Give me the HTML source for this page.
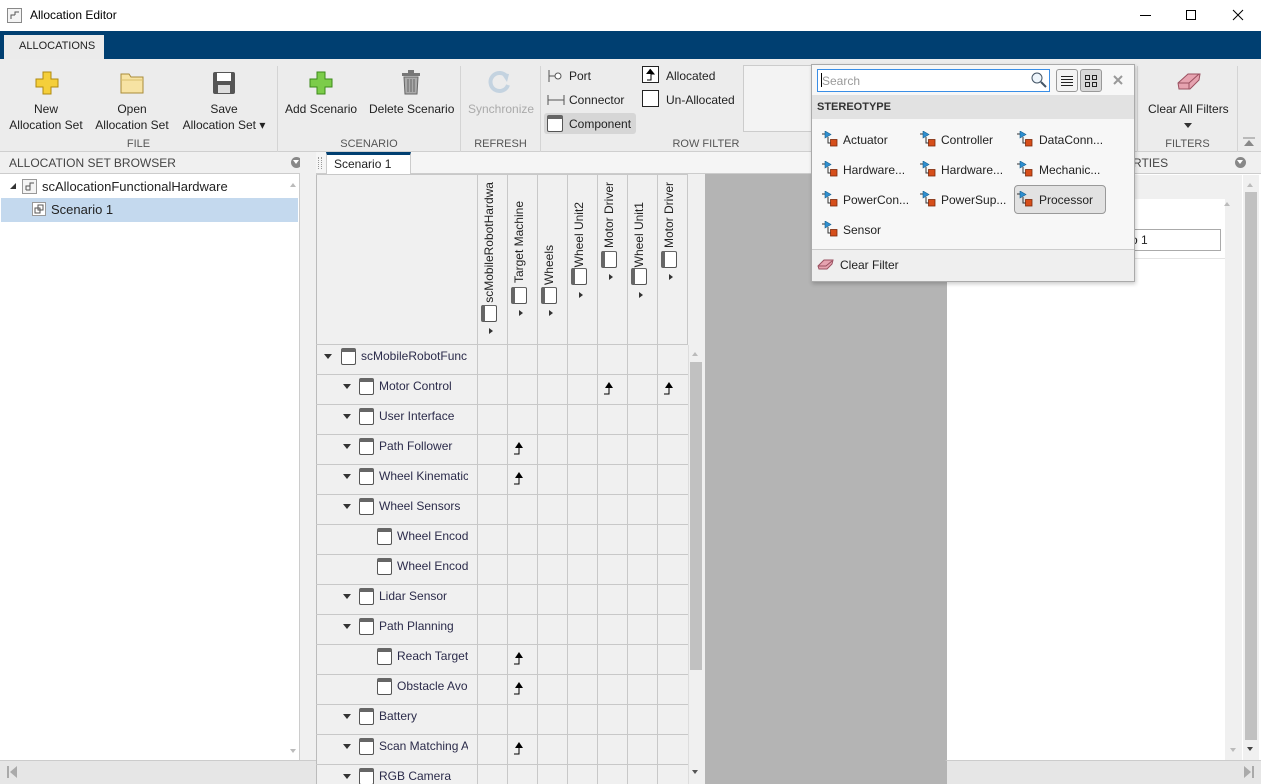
<!DOCTYPE html>
<html><head><meta charset="utf-8"><style>
*{box-sizing:border-box;margin:0;padding:0}
html,body{width:1261px;height:784px;overflow:hidden}
body{position:relative;background:#f0f0f0;font-family:"Liberation Sans",sans-serif;font-size:12px;color:#222}
.a{position:absolute}
.t{position:absolute;white-space:nowrap}
.lbl{position:absolute;font-size:11px;color:#555;text-align:center}
.sep{position:absolute;top:66px;width:1px;height:86px;background:#d4d4d4}
.ci{position:absolute;width:15px;height:17px;border:1.5px solid #555;border-top:4px solid #666;border-radius:2px;background:#fff}
.tri{position:absolute;width:0;height:0;border-left:4px solid transparent;border-right:4px solid transparent;border-top:5px solid #333}
.trr{position:absolute;width:0;height:0;border-top:3.5px solid transparent;border-bottom:3.5px solid transparent;border-left:4px solid #333}
.row{position:absolute;left:316px;width:372px;height:30px;border-bottom:1px solid #c8c8c8}
.rt{position:absolute;top:4px;font-size:12px;color:#2b2b4a;white-space:nowrap;overflow:hidden}
.vl{position:absolute;top:174px;width:1px;height:610px;background:#c8c8c8}
.vt{position:absolute;writing-mode:vertical-rl;transform:rotate(180deg);font-size:12px;color:#222;white-space:nowrap}
.st{position:absolute;font-size:12px;color:#222}
</style></head><body>
<div class="a" style="left:0;top:0;width:1261px;height:31px;background:#fff"></div>
<div class="a" style="left:7px;top:8px;width:15px;height:15px;border:1px solid #888;background:#f4f4f4"></div>
<svg class="a" style="left:8px;top:9px" width="13" height="13"><path d="M3 10V6h4M7 6V3h4" stroke="#555" fill="none"/></svg>
<div class="t" style="left:30px;top:8px;font-size:12px;color:#000">Allocation Editor</div>
<div class="a" style="left:1140px;top:15px;width:11px;height:1px;background:#000"></div>
<div class="a" style="left:1186px;top:10px;width:10px;height:10px;border:1px solid #000"></div>
<svg class="a" style="left:1232px;top:9px" width="12" height="12"><path d="M1 1L11 11M11 1L1 11" stroke="#000"/></svg>
<div class="a" style="left:0;top:31px;width:1261px;height:28px;background:#003f71"></div>
<div class="a" style="left:4px;top:35px;width:100px;height:25px;background:#ebebeb"></div>
<div class="t" style="left:19px;top:40px;font-size:11px;color:#222">ALLOCATIONS</div>
<div class="a" style="left:0;top:59px;width:1261px;height:93px;background:#ececec;border-bottom:1px solid #cfcfcf"></div>
<svg class="a" style="left:34px;top:70px" width="26" height="26"><path d="M9 2h8v7h7v8h-7v7H9v-7H2V9h7z" fill="#f5cf3a" stroke="#b08a10"/></svg>
<div class="t" style="left:0;top:101px;width:92px;text-align:center;line-height:16px">New<br>Allocation Set</div>
<svg class="a" style="left:118px;top:70px" width="28" height="26"><path d="M3 4h8l2 3h12v16H3z" fill="#f7e3a3" stroke="#a98b3a"/><path d="M3 10h22" stroke="#d9bf6e"/></svg>
<div class="t" style="left:88px;top:101px;width:88px;text-align:center;line-height:16px">Open<br>Allocation Set</div>
<svg class="a" style="left:211px;top:70px" width="26" height="26"><rect x="2" y="2" width="22" height="22" rx="2" fill="#555"/><rect x="6" y="3" width="14" height="8" fill="#fff"/><rect x="7" y="15" width="12" height="8" fill="#ddd"/></svg>
<div class="t" style="left:178px;top:101px;width:92px;text-align:center;line-height:16px">Save<br>Allocation Set &#9662;</div>
<div class="sep" style="left:277px"></div>
<div class="lbl" style="left:0;top:138px;width:277px">FILE</div>
<svg class="a" style="left:308px;top:70px" width="26" height="26"><path d="M9 2h8v7h7v8h-7v7H9v-7H2V9h7z" fill="#7ccc4a" stroke="#3c8a1a"/></svg>
<div class="t" style="left:285px;top:102px">Add Scenario</div>
<svg class="a" style="left:400px;top:70px" width="22" height="26"><rect x="2" y="3" width="18" height="3" fill="#777"/><rect x="8" y="0" width="6" height="3" fill="#777"/><path d="M4 7h14l-1 17H5z" fill="#aaa" stroke="#666"/><path d="M8 9v13M11 9v13M14 9v13" stroke="#666"/></svg>
<div class="t" style="left:369px;top:102px">Delete Scenario</div>
<div class="sep" style="left:460px"></div>
<div class="lbl" style="left:278px;top:138px;width:182px">SCENARIO</div>
<svg class="a" style="left:487px;top:69px" width="26" height="26"><path d="M20 8A9 9 0 1 0 21 16" stroke="#c4d3e0" stroke-width="4" fill="none"/><path d="M14 4l8 1-2 8z" fill="#c4d3e0"/></svg>
<div class="t" style="left:468px;top:102px;color:#aaa">Synchronize</div>
<div class="sep" style="left:540px"></div>
<div class="lbl" style="left:461px;top:138px;width:79px">REFRESH</div>
<svg class="a" style="left:547px;top:69px" width="18" height="14"><path d="M2 1v12M2 7h6" stroke="#555"/><circle cx="11" cy="7" r="3" fill="#fff" stroke="#555"/></svg>
<div class="t" style="left:569px;top:69px">Port</div>
<svg class="a" style="left:546px;top:93px" width="20" height="14"><path d="M2 2v10M18 2v10M2 7h16" stroke="#555"/></svg>
<div class="t" style="left:569px;top:93px">Connector</div>
<div class="a" style="left:544px;top:113px;width:92px;height:21px;background:#d6d6d6;border-radius:3px"></div>
<div class="ci" style="left:547px;top:115px;width:16px;height:17px"></div>
<div class="t" style="left:569px;top:117px">Component</div>
<div class="a" style="left:642px;top:66px;width:17px;height:17px;border:1.5px solid #222;background:#fff"></div>
<svg class="a" style="left:642px;top:66px" width="17" height="17"><path d="M8 3l4 5H9v6H5" stroke="#000" fill="none"/><path d="M8 3l4 5H4z" fill="#000"/></svg>
<div class="t" style="left:666px;top:69px">Allocated</div>
<div class="a" style="left:642px;top:90px;width:17px;height:17px;border:1.5px solid #222;background:#fff"></div>
<div class="t" style="left:666px;top:93px">Un-Allocated</div>
<div class="a" style="left:743px;top:65px;width:75px;height:67px;border:1px solid #ccc;background:#f3f3f3"></div>
<div class="lbl" style="left:541px;top:138px;width:330px">ROW FILTER</div>
<div class="sep" style="left:1137px"></div>
<svg class="a" style="left:1174px;top:70px" width="30" height="22"><path d="M4 13L14 4h12l-1 6-9 9H5z" fill="#e6a3b0" stroke="#9a5060"/><path d="M4 13h11l10-9M15 13v6" stroke="#9a5060" fill="none"/></svg>
<div class="t" style="left:1148px;top:102px">Clear All Filters</div>
<div class="tri" style="left:1184px;top:123px"></div>
<div class="lbl" style="left:1138px;top:138px;width:99px">FILTERS</div>
<div class="sep" style="left:1237px"></div>
<svg class="a" style="left:1242px;top:137px" width="14" height="12"><path d="M1 1h12" stroke="#888"/><path d="M7 3l5 6H2z" fill="#888"/></svg>

<div class="a" style="left:0;top:152px;width:300px;height:22px;background:#f0f0f0;border-bottom:1px solid #ccc"></div>
<div class="t" style="left:9px;top:156px;color:#444">ALLOCATION SET BROWSER</div>
<div class="a" style="left:291px;top:157px;width:11px;height:11px;border-radius:50%;background:#888"></div>
<div class="a" style="left:293px;top:160px;border-left:3.5px solid transparent;border-right:3.5px solid transparent;border-top:4px solid #fff"></div>
<div class="a" style="left:0;top:174px;width:300px;height:586px;background:#fff;border-right:1px solid #ccc"></div>
<div class="a" style="left:1px;top:198px;width:297px;height:24px;background:#c4d9ee"></div>
<div class="a" style="left:10px;top:183px;border-left:6px solid transparent;border-bottom:6px solid #333"></div>
<div class="a" style="left:22px;top:179px;width:15px;height:15px;border:1px solid #999;background:#f4f4f4"></div>
<svg class="a" style="left:23px;top:180px" width="13" height="13"><path d="M3 10V6h4V3h4M3 10h4V6" stroke="#555" fill="none"/></svg>
<div class="t" style="left:42px;top:179px;font-size:13px">scAllocationFunctionalHardware</div>
<div class="a" style="left:32px;top:202px;width:14px;height:14px;border:1px solid #999;background:#fff"></div>
<svg class="a" style="left:33px;top:203px" width="12" height="12"><rect x="2" y="5" width="5" height="5" fill="none" stroke="#555"/><rect x="5" y="2" width="5" height="5" fill="none" stroke="#555"/></svg>
<div class="t" style="left:51px;top:202px;font-size:13px">Scenario 1</div>
<div class="a" style="left:290px;top:183px;border-left:3.5px solid transparent;border-right:3.5px solid transparent;border-bottom:4px solid #bbb"></div>
<div class="a" style="left:290px;top:749px;border-left:3.5px solid transparent;border-right:3.5px solid transparent;border-top:4px solid #bbb"></div>
<div class="a" style="left:0;top:760px;width:316px;height:24px;background:#e6e6e6;border-top:1px solid #ccc"></div>
<svg class="a" style="left:6px;top:765px" width="12" height="14"><path d="M2 1v12" stroke="#aaa" stroke-width="2"/><path d="M11 1v12L4 7z" fill="#aaa"/></svg>
<div class="a" style="left:300px;top:152px;width:16px;height:608px;background:#f0f0f0"></div>

<div class="a" style="left:316px;top:152px;width:629px;height:22px;background:#f5f5f5;border-bottom:1px solid #ccc"></div>
<div class="a" style="left:318px;top:157px;width:4px;height:12px;border-left:1px dotted #999;border-right:1px dotted #999"></div>
<div class="a" style="left:326px;top:152px;width:85px;height:23px;background:#fff;border-top:3px solid #003f71;border-left:1px solid #ccc;border-right:1px solid #ccc"></div>
<div class="t" style="left:334px;top:157px;font-size:12px">Scenario 1</div>

<div class="a" style="left:316px;top:174px;width:389px;height:610px;background:#f0f0f0;border-left:1px solid #bbb"></div>
<div class="a" style="left:316px;top:344px;width:372px;height:1px;background:#c8c8c8"></div>
<div class="vl" style="left:477px"></div><div class="vl" style="left:507px"></div><div class="vl" style="left:537px"></div><div class="vl" style="left:567px"></div><div class="vl" style="left:597px"></div><div class="vl" style="left:627px"></div><div class="vl" style="left:657px"></div><div class="vl" style="left:687px;height:171px"></div>
<div class="a" style="left:316px;top:174px;width:372px;height:1px;background:#c8c8c8"></div>
<div class="a" style="left:477px;top:178px;width:210px;height:167px;overflow:hidden">
<div class="vt" style="left:5px;bottom:42px">scMobileRobotHardwa</div>
<div class="vt" style="left:35px;bottom:62px">Target Machine</div>
<div class="vt" style="left:65px;bottom:60px">Wheels</div>
<div class="vt" style="left:95px;bottom:78px">Wheel Unit2</div>
<div class="vt" style="left:125px;bottom:97px">Motor Driver</div>
<div class="vt" style="left:155px;bottom:78px">Wheel Unit1</div>
<div class="vt" style="left:185px;bottom:97px">Motor Driver</div>
</div>
<div class="ci" style="left:481px;top:305px;width:16px;border-top-width:1.5px;border-left:4px solid #666"></div>
<div class="ci" style="left:511px;top:287px;width:16px;border-top-width:1.5px;border-left:4px solid #666"></div>
<div class="ci" style="left:541px;top:287px;width:16px;border-top-width:1.5px;border-left:4px solid #666"></div>
<div class="ci" style="left:571px;top:268px;width:16px;border-top-width:1.5px;border-left:4px solid #666"></div>
<div class="ci" style="left:601px;top:251px;width:16px;border-top-width:1.5px;border-left:4px solid #666"></div>
<div class="ci" style="left:631px;top:268px;width:16px;border-top-width:1.5px;border-left:4px solid #666"></div>
<div class="ci" style="left:661px;top:251px;width:16px;border-top-width:1.5px;border-left:4px solid #666"></div>
<div class="trr" style="left:489px;top:328px"></div>
<div class="trr" style="left:519px;top:310px"></div>
<div class="trr" style="left:549px;top:310px"></div>
<div class="trr" style="left:579px;top:292px"></div>
<div class="trr" style="left:609px;top:274px"></div>
<div class="trr" style="left:639px;top:292px"></div>
<div class="trr" style="left:669px;top:274px"></div>

<div class="row" style="top:345px"><div class="tri" style="left:8px;top:9px"></div><div class="ci" style="left:25px;top:3px"></div><div class="rt" style="left:45px;width:107px">scMobileRobotFunc</div></div>
<div class="row" style="top:375px"><div class="tri" style="left:27px;top:9px"></div><div class="ci" style="left:43px;top:3px"></div><div class="rt" style="left:63px;width:89px">Motor Control</div></div>
<div class="row" style="top:405px"><div class="tri" style="left:27px;top:9px"></div><div class="ci" style="left:43px;top:3px"></div><div class="rt" style="left:63px;width:89px">User Interface</div></div>
<div class="row" style="top:435px"><div class="tri" style="left:27px;top:9px"></div><div class="ci" style="left:43px;top:3px"></div><div class="rt" style="left:63px;width:89px">Path Follower</div></div>
<div class="row" style="top:465px"><div class="tri" style="left:27px;top:9px"></div><div class="ci" style="left:43px;top:3px"></div><div class="rt" style="left:63px;width:89px">Wheel Kinematic</div></div>
<div class="row" style="top:495px"><div class="tri" style="left:27px;top:9px"></div><div class="ci" style="left:43px;top:3px"></div><div class="rt" style="left:63px;width:89px">Wheel Sensors</div></div>
<div class="row" style="top:525px"><div class="ci" style="left:61px;top:3px"></div><div class="rt" style="left:81px;width:71px">Wheel Encoder</div></div>
<div class="row" style="top:555px"><div class="ci" style="left:61px;top:3px"></div><div class="rt" style="left:81px;width:71px">Wheel Encoder</div></div>
<div class="row" style="top:585px"><div class="tri" style="left:27px;top:9px"></div><div class="ci" style="left:43px;top:3px"></div><div class="rt" style="left:63px;width:89px">Lidar Sensor</div></div>
<div class="row" style="top:615px"><div class="tri" style="left:27px;top:9px"></div><div class="ci" style="left:43px;top:3px"></div><div class="rt" style="left:63px;width:89px">Path Planning</div></div>
<div class="row" style="top:645px"><div class="ci" style="left:61px;top:3px"></div><div class="rt" style="left:81px;width:71px">Reach Target</div></div>
<div class="row" style="top:675px"><div class="ci" style="left:61px;top:3px"></div><div class="rt" style="left:81px;width:71px">Obstacle Avoidance</div></div>
<div class="row" style="top:705px"><div class="tri" style="left:27px;top:9px"></div><div class="ci" style="left:43px;top:3px"></div><div class="rt" style="left:63px;width:89px">Battery</div></div>
<div class="row" style="top:735px"><div class="tri" style="left:27px;top:9px"></div><div class="ci" style="left:43px;top:3px"></div><div class="rt" style="left:63px;width:89px">Scan Matching A</div></div>
<div class="row" style="top:765px;height:19px;border-bottom:none"><div class="tri" style="left:27px;top:9px"></div><div class="ci" style="left:43px;top:3px"></div><div class="rt" style="left:63px;width:89px">RGB Camera</div></div>
<svg class="a" style="left:603px;top:380px" width="14" height="16"><path d="M1 14h5V6" stroke="#000" fill="none"/><path d="M6 2l4 6H2z" fill="#000"/></svg>
<svg class="a" style="left:663px;top:380px" width="14" height="16"><path d="M1 14h5V6" stroke="#000" fill="none"/><path d="M6 2l4 6H2z" fill="#000"/></svg>
<svg class="a" style="left:513px;top:440px" width="14" height="16"><path d="M1 14h5V6" stroke="#000" fill="none"/><path d="M6 2l4 6H2z" fill="#000"/></svg>
<svg class="a" style="left:513px;top:470px" width="14" height="16"><path d="M1 14h5V6" stroke="#000" fill="none"/><path d="M6 2l4 6H2z" fill="#000"/></svg>
<svg class="a" style="left:513px;top:650px" width="14" height="16"><path d="M1 14h5V6" stroke="#000" fill="none"/><path d="M6 2l4 6H2z" fill="#000"/></svg>
<svg class="a" style="left:513px;top:680px" width="14" height="16"><path d="M1 14h5V6" stroke="#000" fill="none"/><path d="M6 2l4 6H2z" fill="#000"/></svg>
<svg class="a" style="left:513px;top:740px" width="14" height="16"><path d="M1 14h5V6" stroke="#000" fill="none"/><path d="M6 2l4 6H2z" fill="#000"/></svg>
<div class="a" style="left:688px;top:345px;width:17px;height:439px;background:#f0f0f0;border-left:1px solid #ddd"></div>
<div class="a" style="left:690px;top:362px;width:12px;height:308px;background:#c1c1c1"></div>
<div class="a" style="left:692px;top:352px;border-left:3.5px solid transparent;border-right:3.5px solid transparent;border-bottom:4px solid #bbb"></div>
<div class="a" style="left:692px;top:770px;border-left:3.5px solid transparent;border-right:3.5px solid transparent;border-top:4px solid #555"></div>
<div class="a" style="left:705px;top:174px;width:240px;height:610px;background:#b4b4b4"></div>

<div class="a" style="left:945px;top:152px;width:316px;height:22px;background:#f0f0f0;border-bottom:1px solid #ccc"></div>
<div class="t" style="left:1125px;top:156px;color:#444">ERTIES</div>
<div class="a" style="left:1235px;top:157px;width:11px;height:11px;border-radius:50%;background:#888"></div>
<div class="a" style="left:1237px;top:160px;border-left:3.5px solid transparent;border-right:3.5px solid transparent;border-top:4px solid #fff"></div>
<div class="a" style="left:945px;top:174px;width:316px;height:586px;background:#fff;border-left:2px solid #b4b4b4"></div>
<div class="a" style="left:947px;top:175px;width:278px;height:24px;background:#f0f0f0"></div>
<div class="a" style="left:947px;top:258px;width:278px;height:1px;background:#e4e4e4"></div>
<div class="a" style="left:1130px;top:229px;width:91px;height:22px;border:1px solid #aaa;background:#fff"></div>
<div class="t" style="left:1131px;top:233px">o 1</div>
<div class="a" style="left:1225px;top:175px;width:17px;height:585px;background:#f0f0f0"></div>
<div class="a" style="left:1224px;top:202px;border-left:3.5px solid transparent;border-right:3.5px solid transparent;border-bottom:4px solid #bbb"></div>
<div class="a" style="left:1230px;top:748px;border-left:3.5px solid transparent;border-right:3.5px solid transparent;border-top:4px solid #bbb"></div>
<div class="a" style="left:1243px;top:175px;width:16px;height:585px;background:#f0f0f0"></div>
<div class="a" style="left:1245px;top:192px;width:12px;height:548px;background:#c1c1c1"></div>
<div class="a" style="left:1247px;top:183px;border-left:3.5px solid transparent;border-right:3.5px solid transparent;border-bottom:4px solid #bbb"></div>
<div class="a" style="left:1247px;top:747px;border-left:3.5px solid transparent;border-right:3.5px solid transparent;border-top:4px solid #444"></div>
<div class="a" style="left:945px;top:760px;width:316px;height:24px;background:#e6e6e6;border-top:1px solid #ccc;border-left:2px solid #b4b4b4"></div>
<svg class="a" style="left:1243px;top:765px" width="12" height="14"><path d="M10 1v12" stroke="#aaa" stroke-width="2"/><path d="M1 1v12L8 7z" fill="#aaa"/></svg>

<div class="a" style="left:811px;top:64px;width:324px;height:218px;background:#f7f7f7;border:1px solid #aaa;box-shadow:1px 2px 4px rgba(0,0,0,.2)"></div>
<div class="a" style="left:817px;top:69px;width:233px;height:23px;background:#fff;border:1px solid #3a8ee6"></div>
<div class="a" style="left:821px;top:73px;width:1px;height:14px;background:#000"></div>
<div class="t" style="left:822px;top:74px;color:#999">Search</div>
<svg class="a" style="left:1030px;top:71px" width="18" height="18"><circle cx="7" cy="7" r="5" fill="#eef5fb" stroke="#456"/><path d="M11 11l5 5" stroke="#456" stroke-width="2"/></svg>
<div class="a" style="left:1056px;top:69px;width:22px;height:23px;border:1px solid #999;border-radius:3px;background:#f4f4f4"></div>
<svg class="a" style="left:1061px;top:75px" width="12" height="12"><path d="M0 1.5h12M0 4.5h12M0 7.5h12M0 10.5h12" stroke="#222"/></svg>
<div class="a" style="left:1080px;top:69px;width:22px;height:23px;border:1px solid #999;border-radius:3px;background:#d8d8d8"></div>
<svg class="a" style="left:1085px;top:75px" width="12" height="12"><rect x="0.5" y="0.5" width="4" height="4" fill="none" stroke="#222"/><rect x="7.5" y="0.5" width="4" height="4" fill="none" stroke="#222"/><rect x="0.5" y="7.5" width="4" height="4" fill="none" stroke="#222"/><rect x="7.5" y="7.5" width="4" height="4" fill="none" stroke="#222"/></svg>
<svg class="a" style="left:1113px;top:75px" width="10" height="10"><path d="M1 1l8 8M9 1L1 9" stroke="#999" stroke-width="2"/></svg>
<div class="a" style="left:812px;top:95px;width:322px;height:24px;background:#e2e2e2"></div>
<div class="t" style="left:817px;top:101px;font-size:11px;font-weight:bold;color:#333">STEREOTYPE</div>
<div class="a" style="left:1014px;top:185px;width:92px;height:29px;background:#e2e2e2;border:1px solid #999;border-radius:4px"></div>
<svg width="0" height="0" style="position:absolute"><defs><symbol id="s" viewBox="0 0 16 16"><path d="M0 3h3" stroke="#333"/><path d="M3 0v7l6-3.5z" fill="#2f8fd0" stroke="#16608f" stroke-width=".6"/><path d="M6 6v6h3" stroke="#333" fill="none"/><rect x="8.5" y="8.5" width="6.5" height="6.5" fill="#d64e1a" stroke="#7a2a0a" stroke-width=".8"/></symbol></defs></svg>
<svg class="a" style="left:822px;top:131px" width="16" height="16"><use href="#s"/></svg><div class="st" style="left:843px;top:133px">Actuator</div>
<svg class="a" style="left:920px;top:131px" width="16" height="16"><use href="#s"/></svg><div class="st" style="left:941px;top:133px">Controller</div>
<svg class="a" style="left:1017px;top:131px" width="16" height="16"><use href="#s"/></svg><div class="st" style="left:1039px;top:133px">DataConn...</div>
<svg class="a" style="left:822px;top:161px" width="16" height="16"><use href="#s"/></svg><div class="st" style="left:843px;top:163px">Hardware...</div>
<svg class="a" style="left:920px;top:161px" width="16" height="16"><use href="#s"/></svg><div class="st" style="left:941px;top:163px">Hardware...</div>
<svg class="a" style="left:1017px;top:161px" width="16" height="16"><use href="#s"/></svg><div class="st" style="left:1039px;top:163px">Mechanic...</div>
<svg class="a" style="left:822px;top:191px" width="16" height="16"><use href="#s"/></svg><div class="st" style="left:843px;top:193px">PowerCon...</div>
<svg class="a" style="left:920px;top:191px" width="16" height="16"><use href="#s"/></svg><div class="st" style="left:941px;top:193px">PowerSup...</div>
<svg class="a" style="left:1017px;top:191px" width="16" height="16"><use href="#s"/></svg><div class="st" style="left:1039px;top:193px">Processor</div>
<svg class="a" style="left:822px;top:221px" width="16" height="16"><use href="#s"/></svg><div class="st" style="left:843px;top:223px">Sensor</div>
<div class="a" style="left:812px;top:249px;width:322px;height:32px;background:#efefef;border-top:1px solid #ccc"></div>
<svg class="a" style="left:817px;top:257px" width="18" height="14"><path d="M1 9L7 3h9l-1 4-5 5H2z" fill="#e6a3b0" stroke="#9a5060"/><path d="M1 9h8l6-5" stroke="#9a5060" fill="none"/></svg>
<div class="st" style="left:840px;top:258px">Clear Filter</div>
</body></html>
